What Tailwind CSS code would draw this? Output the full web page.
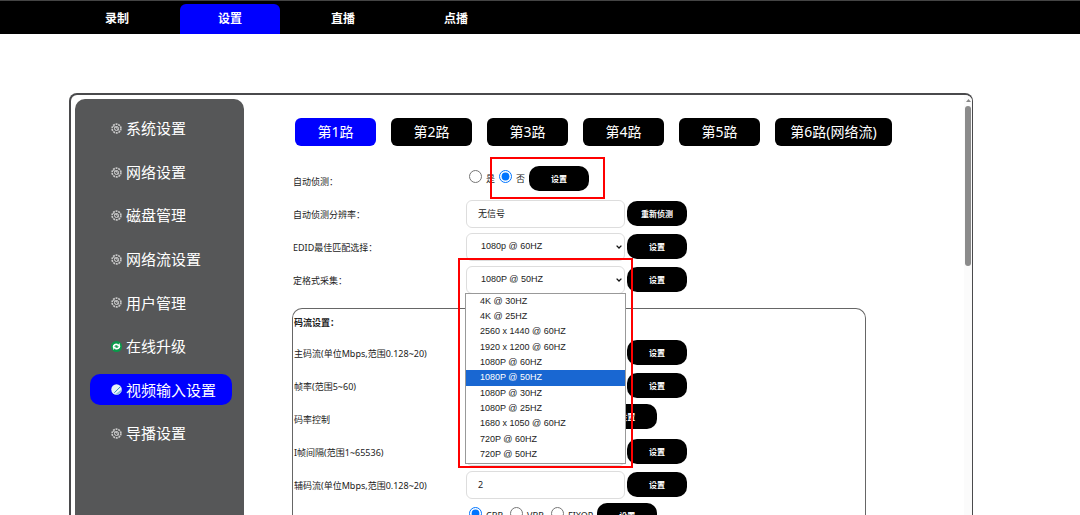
<!DOCTYPE html>
<html lang="zh-CN">
<head>
  <meta charset="UTF-8" />
  <meta name="viewport" content="width=device-width, initial-scale=1" />
  <title>设置</title>
  <script src="https://cdn.jsdelivr.net/npm/@tailwindcss/browser@4"></script>
</head>
<body class="flex h-screen flex-col overflow-hidden bg-white font-['Noto_Sans','Noto_Sans_CJK_SC',sans-serif] text-[9px] text-[#222]">

  <!-- Icons -->
  <svg class="hidden">
    <symbol id="gear" viewBox="0 0 20 20">
      <circle cx="10" cy="10" r="8" fill="none" stroke="#c8c8c8" stroke-width="3" stroke-dasharray="3.6 1.4" />
      <circle cx="10" cy="10" r="3.6" fill="none" stroke="#e8e8e8" stroke-width="1.6" />
      <path d="M4 6l4 2M11 10l4 4M10 10V7" stroke="#dddddd" stroke-width="1.4" />
    </symbol>
    <symbol id="upgrade" viewBox="0 0 20 20">
      <circle cx="10" cy="10" r="10" fill="#0a9a4a" />
      <path d="M4.500 11.500C4.500 7 8 5 12.500 7" fill="none" stroke="#fff" stroke-width="3" />
      <path d="M15.500 8.500C15.500 13 12 15 7.500 13" fill="none" stroke="#fff" stroke-width="3" />
      <path d="M10.500 9.500L16.500 9.500 15.500 3.500z" fill="#fff" />
      <path d="M9.500 10.500L3.500 10.500 4.500 16.500z" fill="#fff" />
    </symbol>
    <symbol id="video" viewBox="0 0 20 20">
      <circle cx="10" cy="10" r="9.500" fill="#e6f1f6" />
      <path d="M19.500 10a9.500 9.500 0 0 1-13 8.800z" fill="#8fc3dd" />
      <path d="M6 16L17 5" stroke="#2f8fb8" stroke-width="1.800" />
      <path d="M8 18L19 7" stroke="#fff" stroke-width="1.500" />
    </symbol>
    <symbol id="chevron" viewBox="0 0 6 4">
      <path d="M.6.6L3 3 5.400.6" fill="none" stroke="#111" stroke-width="1.300" />
    </symbol>
  </svg>

  <!-- Top navigation -->
  <nav class="flex h-[34px] shrink-0 items-end gap-[13px] border-t border-[#444] bg-black pl-[67px] text-xs font-bold text-white">
    <a href="#" class="flex h-[30px] w-[100px] items-center justify-center">录制</a>
    <a href="#" class="flex h-[30px] w-[100px] items-center justify-center rounded-t-md bg-[#00f]">设置</a>
    <a href="#" class="flex h-[30px] w-[100px] items-center justify-center">直播</a>
    <a href="#" class="flex h-[30px] w-[100px] items-center justify-center">点播</a>
  </nav>

  <div class="relative mt-[59px] mr-[107px] ml-[69px] flex min-h-0 flex-1 overflow-hidden rounded-t-lg border-t-2 border-r border-l-2 border-[#4a4a4c] pt-1 pl-1">

    <!-- Sidebar -->
    <aside class="w-[169px] shrink-0 rounded-t-[10px] bg-[#565758] pt-[14px] pr-3 pl-[15px] text-[15px] text-white">
      <ul class="flex h-[336px] flex-col justify-between">
        <li><a href="#" class="flex h-[31px] items-center gap-1 pl-[21px]"><svg class="size-[11px]"><use href="#gear" /></svg>系统设置</a></li>
        <li><a href="#" class="flex h-[31px] items-center gap-1 pl-[21px]"><svg class="size-[11px]"><use href="#gear" /></svg>网络设置</a></li>
        <li><a href="#" class="flex h-[31px] items-center gap-1 pl-[21px]"><svg class="size-[11px]"><use href="#gear" /></svg>磁盘管理</a></li>
        <li><a href="#" class="flex h-[31px] items-center gap-1 pl-[21px]"><svg class="size-[11px]"><use href="#gear" /></svg>网络流设置</a></li>
        <li><a href="#" class="flex h-[31px] items-center gap-1 pl-[21px]"><svg class="size-[11px]"><use href="#gear" /></svg>用户管理</a></li>
        <li><a href="#" class="flex h-[31px] items-center gap-1 pl-[21px]"><svg class="size-[11px]"><use href="#upgrade" /></svg>在线升级</a></li>
        <li><a href="#" class="flex h-[31px] items-center gap-1 rounded-[10px] bg-[#00f] pl-[21px]"><svg class="size-[11px]"><use href="#video" /></svg>视频输入设置</a></li>
        <li><a href="#" class="flex h-[31px] items-center gap-1 pl-[21px]"><svg class="size-[11px]"><use href="#gear" /></svg>导播设置</a></li>
      </ul>
    </aside>

    <!-- Content -->
    <main class="relative min-w-0 flex-1 pt-[19px] pl-[48px]">
      <div class="flex gap-[15px] pl-[3px] text-sm text-white">
        <button class="h-7 w-[81px] rounded-md bg-[#00f]">第1路</button>
        <button class="h-7 w-[81px] rounded-md bg-black">第2路</button>
        <button class="h-7 w-[81px] rounded-md bg-black">第3路</button>
        <button class="h-7 w-[81px] rounded-md bg-black">第4路</button>
        <button class="h-7 w-[81px] rounded-md bg-black">第5路</button>
        <button class="h-7 w-[117px] rounded-md bg-black">第6路(网络流)</button>
      </div>

      <div class="mt-[19px] pl-px">
        <div class="flex h-[33px] items-center">
          <span class="w-[173px]">自动侦测：</span>
          <div class="flex items-center gap-1 pb-[6px] pl-[3px]">
            <input type="radio" name="detect" id="detect-yes" class="mb-1 size-[13px]" />
            <label for="detect-yes">是</label>
            <input type="radio" name="detect" id="detect-no" class="mb-1 size-[13px]" checked />
            <label for="detect-no">否</label>
            <button class="h-[25px] w-[60px] rounded-[10px] bg-black text-[8px] font-bold text-white">设置</button>
          </div>
        </div>
        <div class="flex h-[33px] items-center">
          <label for="resolution" class="w-[173px]">自动侦测分辨率：</label>
          <div class="flex items-center gap-[2px] pb-[2px]">
            <input type="text" id="resolution" value="无信号" class="h-7 w-[159px] rounded-md border border-[#ddd] px-[11px]" />
            <button class="h-[25px] w-[60px] rounded-[10px] bg-black text-[8px] font-bold text-white">重新侦测</button>
          </div>
        </div>
        <div class="flex h-[33px] items-center">
          <label for="edid" class="w-[173px]">EDID最佳匹配选择：</label>
          <div class="relative flex items-center gap-[2px] pb-[2px]">
            <select id="edid" class="h-7 w-[159px] appearance-none rounded-md border border-[#ddd] pl-[14px] font-['Liberation_Sans',sans-serif]">
              <option>1080p @ 60HZ</option>
            </select>
            <svg class="pointer-events-none absolute top-3 left-[150px] h-1 w-[6px]"><use href="#chevron" /></svg>
            <button class="h-[25px] w-[60px] rounded-[10px] bg-black text-[8px] font-bold text-white">设置</button>
          </div>
        </div>
        <div class="flex h-[33px] items-center">
          <label for="format" class="w-[173px]">定格式采集：</label>
          <div class="relative flex items-center gap-[2px] pb-[2px]">
            <select id="format" class="h-7 w-[159px] appearance-none rounded-md border border-[#ddd] pl-[14px] font-['Liberation_Sans',sans-serif]">
              <option>1080P @ 50HZ</option>
            </select>
            <svg class="pointer-events-none absolute top-3 left-[150px] h-1 w-[6px]"><use href="#chevron" /></svg>
            <button class="h-[25px] w-[60px] rounded-[10px] bg-black text-[8px] font-bold text-white">设置</button>

            <!-- Open option list -->
            <ul role="listbox" class="absolute top-[27px] -left-px z-10 grid h-[171px] w-[161px] auto-rows-fr items-stretch border border-[#999] bg-white font-['Liberation_Sans',sans-serif] leading-[15px] *:pl-[14px]">
              <li role="option">4K @ 30HZ</li>
              <li role="option">4K @ 25HZ</li>
              <li role="option">2560 x 1440 @ 60HZ</li>
              <li role="option">1920 x 1200 @ 60HZ</li>
              <li role="option">1080P @ 60HZ</li>
              <li role="option" aria-selected="true" class="bg-[#1967d2] text-white">1080P @ 50HZ</li>
              <li role="option">1080P @ 30HZ</li>
              <li role="option">1080P @ 25HZ</li>
              <li role="option">1680 x 1050 @ 60HZ</li>
              <li role="option">720P @ 60HZ</li>
              <li role="option">720P @ 50HZ</li>
            </ul>
          </div>
        </div>
      </div>

      <!-- Stream settings -->
      <section class="mt-[11px] w-[574px] rounded-t-[10px] border border-b-0 border-[#666] pt-[7px] pl-px">
        <h2 class="h-[21px] font-bold">码流设置：</h2>
        <div class="flex h-[33px] items-center">
          <label for="main-rate" class="w-[172px]">主码流(单位Mbps,范围0.128~20)</label>
          <div class="flex items-center gap-[2px] pb-[2px]">
            <input type="text" id="main-rate" class="h-7 w-[159px] rounded-md border border-[#ddd] px-[11px]" />
            <button class="h-[25px] w-[60px] rounded-[10px] bg-black text-[8px] font-bold text-white">设置</button>
          </div>
        </div>
        <div class="flex h-[33px] items-center">
          <label for="fps" class="w-[172px]">帧率(范围5~60)</label>
          <div class="flex items-center gap-[2px] pb-[2px]">
            <input type="text" id="fps" class="h-7 w-[159px] rounded-md border border-[#ddd] px-[11px]" />
            <button class="h-[25px] w-[60px] rounded-[10px] bg-black text-[8px] font-bold text-white">设置</button>
          </div>
        </div>
        <div class="flex h-[33px] items-center">
          <span class="w-[172px]">码率控制</span>
          <div class="flex items-center gap-1 pb-[6px] pl-[3px]">
            <input type="radio" name="main-mode" id="main-cbr" class="mb-1 size-[13px]" checked />
            <label for="main-cbr" class="w-5">CBR</label>
            <input type="radio" name="main-mode" id="main-vbr" class="mb-1 size-[13px]" />
            <label for="main-vbr" class="w-5">VBR</label>
            <input type="radio" name="main-mode" id="main-fixqp" class="mb-1 size-[13px]" />
            <label for="main-fixqp">FIXQP</label>
            <button class="h-[25px] w-[60px] rounded-[10px] bg-black text-[8px] font-bold text-white">设置</button>
          </div>
        </div>
        <div class="flex h-[33px] items-center">
          <label for="gop" class="w-[172px]">I帧间隔(范围1~65536)</label>
          <div class="flex items-center gap-[2px] pb-[2px]">
            <input type="text" id="gop" class="h-7 w-[159px] rounded-md border border-[#ddd] px-[11px]" />
            <button class="h-[25px] w-[60px] rounded-[10px] bg-black text-[8px] font-bold text-white">设置</button>
          </div>
        </div>
        <div class="flex h-[33px] items-center">
          <label for="sub-rate" class="w-[172px]">辅码流(单位Mbps,范围0.128~20)</label>
          <div class="flex items-center gap-[2px] pb-[2px]">
            <input type="text" id="sub-rate" value="2" class="h-7 w-[159px] rounded-md border border-[#ddd] px-[11px]" />
            <button class="h-[25px] w-[60px] rounded-[10px] bg-black text-[8px] font-bold text-white">设置</button>
          </div>
        </div>
        <div class="flex h-[33px] items-center">
          <span class="w-[172px]"></span>
          <div class="flex items-center gap-1 pb-[6px] pl-[3px]">
            <input type="radio" name="sub-mode" id="sub-cbr" class="mb-1 size-[13px]" checked />
            <label for="sub-cbr" class="w-5">CBR</label>
            <input type="radio" name="sub-mode" id="sub-vbr" class="mb-1 size-[13px]" />
            <label for="sub-vbr" class="w-5">VBR</label>
            <input type="radio" name="sub-mode" id="sub-fixqp" class="mb-1 size-[13px]" />
            <label for="sub-fixqp">FIXQP</label>
            <button class="h-[25px] w-[60px] rounded-[10px] bg-black text-[8px] font-bold text-white">设置</button>
          </div>
        </div>
      </section>

      <!-- Highlight frames -->
      <div class="pointer-events-none absolute top-[58px] left-[246px] z-20 h-[42px] w-[115px] border-2 border-[#f00]"></div>
      <div class="pointer-events-none absolute top-[159px] left-[214px] z-20 h-[210px] w-[175px] border-2 border-[#f00]"></div>
    </main>

    <!-- Scrollbar -->
    <div class="-mt-1 flex w-2 shrink-0 flex-col items-center bg-[#fbfbfb] pt-1">
      <svg class="h-[3px] w-[5px]" viewBox="0 0 5 3"><path d="M0 3L2.500 0 5 3z" fill="#888" /></svg>
      <div class="mt-1 h-[160px] w-[6px] rounded-full bg-[#8b8b8b]"></div>
    </div>
  </div>

</body>
</html>
